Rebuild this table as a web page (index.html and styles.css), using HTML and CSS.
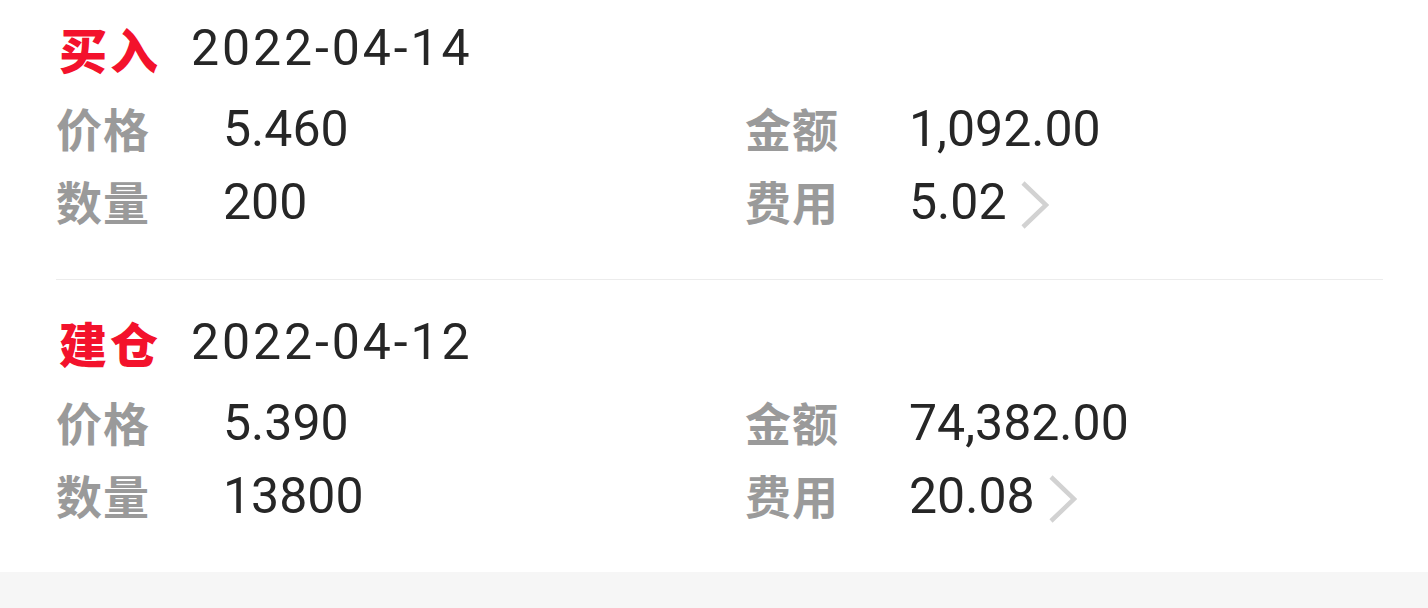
FILE: index.html
```html
<!DOCTYPE html>
<html lang="zh-CN">
<head>
<meta charset="utf-8">
<link rel="stylesheet" href="styles.css">
</head>
<body>
<div class="page">
  <div class="list">
    <div class="item">
      <div class="title-row">
        <span class="type">买入</span>
        <span class="date">2022-04-14</span>
      </div>
      <div class="grid">
        <div class="cell"><span class="label">价格</span><span class="value">5.460</span></div>
        <div class="cell"><span class="label">金额</span><span class="value">1,092.00</span></div>
        <div class="cell"><span class="label">数量</span><span class="value">200</span></div>
        <div class="cell"><span class="label">费用</span><span class="value">5.02</span>
          <svg class="chev" viewBox="0 0 30 48" width="30" height="48"><path d="M4 2 L27 24 L4 46" fill="none" stroke="#d2d2d2" stroke-width="4.5"/></svg>
        </div>
      </div>
    </div>
    <div class="item">
      <div class="title-row">
        <span class="type">建仓</span>
        <span class="date">2022-04-12</span>
      </div>
      <div class="grid">
        <div class="cell"><span class="label">价格</span><span class="value">5.390</span></div>
        <div class="cell"><span class="label">金额</span><span class="value">74,382.00</span></div>
        <div class="cell"><span class="label">数量</span><span class="value">13800</span></div>
        <div class="cell"><span class="label">费用</span><span class="value">20.08</span>
          <svg class="chev" viewBox="0 0 30 48" width="30" height="48"><path d="M4 2 L27 24 L4 46" fill="none" stroke="#d2d2d2" stroke-width="4.5"/></svg>
        </div>
      </div>
    </div>
  </div>
  <div class="footer"></div>
</div>
</body>
</html>
```

FILE: styles.css
```css
html, body {
  margin: 0;
  padding: 0;
  background: #ffffff;
}
body {
  font-family: Roboto, "Noto Sans CJK SC", sans-serif;
  overflow: hidden;
  height: 608px;
}
.page {
  display: flex;
  flex-direction: column;
  height: 608px;
}
.list {
  margin-top: -14px;
  padding: 0 45px 0 56px;
}
.item {
  height: 293px;
  box-sizing: border-box;
  padding-top: 32px;
}
.item + .item {
  border-top: 1px solid #ececec;
}
.title-row {
  display: flex;
  align-items: center;
  height: 60px;
}
.type {
  font-family: "Noto Sans CJK SC", sans-serif;
  font-weight: 900;
  font-size: 48px;
  color: #f3122c;
  margin-left: 3px;
  width: 132px;
  letter-spacing: 3px;
}
.date {
  font-family: Roboto, sans-serif;
  font-size: 50px;
  color: #262626;
  letter-spacing: 2.9px;
}
.grid {
  display: grid;
  grid-template-columns: 689px 1fr;
  grid-auto-rows: 73px;
  margin-top: 14px;
}
.cell {
  display: flex;
  align-items: center;
}
.label {
  font-family: "Noto Sans CJK SC", sans-serif;
  font-weight: 700;
  font-size: 46px;
  color: #9a9a9a;
  width: 167px;
  letter-spacing: 1px;
  margin-top: -4px;
}
.cell:nth-child(even) .label {
  width: 164px;
}
.value {
  font-family: Roboto, sans-serif;
  font-size: 50px;
  color: #262626;
}
.chev {
  margin-left: 12px;
  margin-top: 6px;
}
.footer {
  flex: 1;
  background: #f6f6f6;
}
```
